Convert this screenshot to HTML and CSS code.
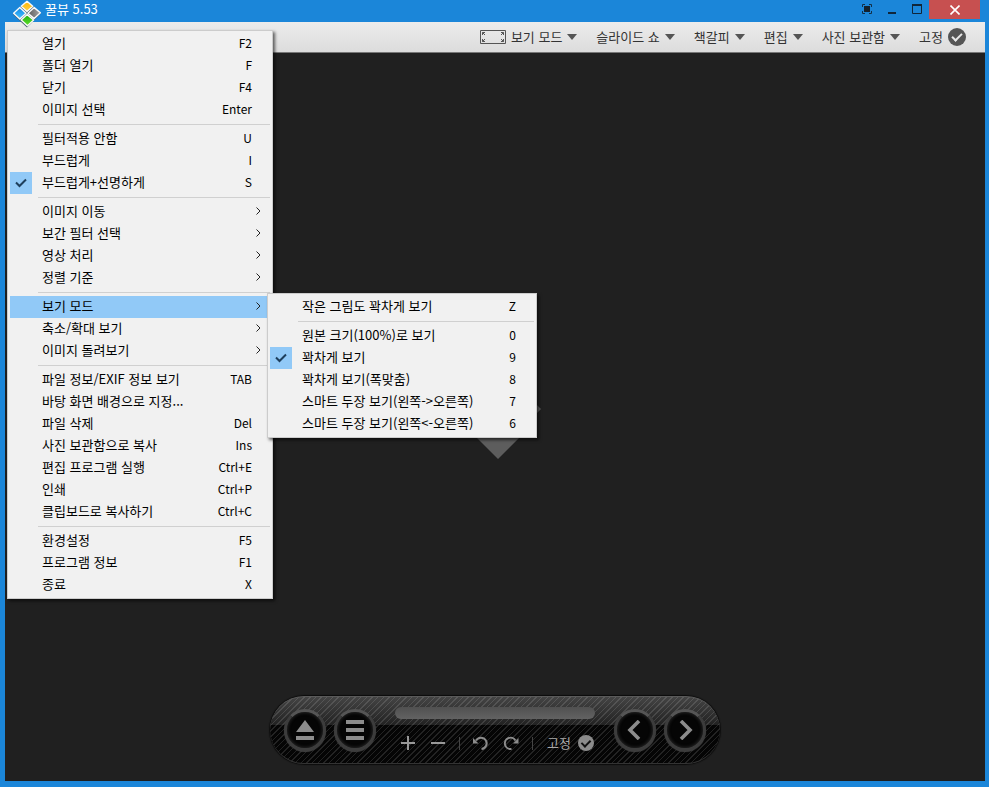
FILE: index.html
```html
<!DOCTYPE html>
<html lang="ko">
<head>
<meta charset="utf-8">
<title>꿀뷰 5.53</title>
<link rel="stylesheet" href="styles.css">
</head>
<body>
<div class="window">
  <header class="titlebar">
    <svg class="logo" width="30" height="28" viewBox="0 0 30 28">
      <defs>
        <linearGradient id="gy" x1="0" y1="0" x2="0" y2="1"><stop offset="0" stop-color="#ffb400"/><stop offset="1" stop-color="#ffd24a"/></linearGradient>
        <linearGradient id="gb" x1="0" y1="0" x2="0" y2="1"><stop offset="0" stop-color="#0f86e4"/><stop offset="1" stop-color="#4cc4ff"/></linearGradient>
        <linearGradient id="gg" x1="0" y1="0" x2="0" y2="1"><stop offset="0" stop-color="#1fae10"/><stop offset="1" stop-color="#62e02c"/></linearGradient>
        <linearGradient id="gk" x1="0" y1="0" x2="1" y2="0"><stop offset="0" stop-color="#5c5c5c"/><stop offset="1" stop-color="#a4a4a4"/></linearGradient>
      </defs>
      <path d="M15 1L29 13.500L15 27.500L1 14.500z" fill="#4a6172"/>
      <g stroke="#fafafa" stroke-width="1.400" stroke-linejoin="round">
        <path d="M15 1.200L20.800 6.200L15 11.400L9.200 6.200z" fill="url(#gy)"/>
        <path d="M7.800 7.600L14 13.200L7.800 19L1.600 13.200z" fill="url(#gb)"/>
        <path d="M22.200 7.600L28.400 12.800L22.200 18.600L16 13.200z" fill="url(#gk)"/>
        <path d="M15.200 14.600L21.600 20L15.500 25.800L9.200 20z" fill="url(#gg)"/>
      </g>
    </svg>
    <h1 class="title">꿀뷰 5.53</h1>
    <div class="controls">
      <button class="control" aria-label="전체 화면">
        <svg width="10" height="10" viewBox="0 0 10 10"><path d="M.5 3V.5H3M7 .5H9.500V3M9.500 7V9.500H7M3 9.500H.5V7" fill="none" stroke="#123048"/><path d="M2 2h6v6H2z" fill="#14212c"/></svg>
      </button>
      <button class="control" aria-label="최소화">
        <svg width="10" height="10" viewBox="0 0 10 10"><path d="M1 8h8v2H1z" fill="#10263a"/></svg>
      </button>
      <button class="control" aria-label="최대화">
        <svg width="10" height="10" viewBox="0 0 10 10"><path d="M.5 1.500h9v8h-9z" fill="none" stroke="#10263a"/><path d="M0 0h10v2H0z" fill="#10263a"/></svg>
      </button>
      <button class="control close" aria-label="닫기">
        <svg width="10" height="10" viewBox="0 0 10 10"><path d="M.5 .5L9.500 9.500M9.500 .5L.5 9.500" stroke="#fff" stroke-width="1.600"/></svg>
      </button>
    </div>
  </header>

  <nav class="toolbar">
    <button class="tool">
      <svg width="26" height="14" viewBox="0 0 26 14" fill="none" stroke="#555"><path d="M.5 .5h25v13H.5z"/><path d="M2.500 5V2.500H5M2.500 2.500l2.500 2.500M21 2.500h2.500V5M23.500 2.500L21 5M2.500 9v2.500H5M2.500 11.500L5 9M23.500 9v2.500H21M23.500 11.500L21 9"/></svg>
      보기 모드 <span class="caret"></span>
    </button>
    <button class="tool">슬라이드 쇼 <span class="caret"></span></button>
    <button class="tool">책갈피 <span class="caret"></span></button>
    <button class="tool">편집 <span class="caret"></span></button>
    <button class="tool">사진 보관함 <span class="caret"></span></button>
    <label class="tool pin">고정 <input type="checkbox" class="round" checked></label>
  </nav>

  <main class="viewer">
    <div class="stage">
      <svg width="100" height="100" viewBox="0 0 100 100" fill="#5d5d5d">
        <path d="M53 0L75 22H31zM53 100L75 78H31zM10 50L16 44V56zM96 50L90 44V56z"/>
      </svg>
    </div>

    <div class="dock">
      <button class="knob" aria-label="열기">
        <svg width="20" height="20" viewBox="0 0 20 20" fill="#8c8c8c"><path d="M10 0L19 12H1zM1 16h18v4H1z"/></svg>
      </button>
      <button class="knob" aria-label="메뉴">
        <svg width="20" height="20" viewBox="0 0 20 20" fill="#8c8c8c"><path d="M1 0h18v4H1zM1 8h18v4H1zM1 16h18v4H1z"/></svg>
      </button>
      <div class="panel">
        <input type="range" class="seek" value="0" aria-label="이미지 위치">
        <div class="actions">
          <button class="action" aria-label="확대">
            <svg width="14" height="14" viewBox="0 0 14 14"><path d="M7 0v14M0 7h14" stroke="#999" stroke-width="2"/></svg>
          </button>
          <button class="action" aria-label="축소">
            <svg width="14" height="14" viewBox="0 0 14 14"><path d="M0 7h14" stroke="#999" stroke-width="2"/></svg>
          </button>
          <span class="divider"></span>
          <button class="action" aria-label="왼쪽으로 회전">
            <svg width="16" height="14" viewBox="0 0 16 14"><path d="M3 4.500A5.700 5.700 0 1 1 8.500 13" fill="none" stroke="#8c8c8c" stroke-width="2"/><path d="M0 2v5.500h5.500z" fill="#8c8c8c"/></svg>
          </button>
          <button class="action" aria-label="오른쪽으로 회전">
            <svg width="16" height="14" viewBox="0 0 16 14"><path d="M12.500 4.500A5.700 5.700 0 1 0 8.500 13" fill="none" stroke="#8c8c8c" stroke-width="2"/><path d="M15.500 2v5.500H10z" fill="#8c8c8c"/></svg>
          </button>
          <span class="divider"></span>
          <label class="lock">고정 <input type="checkbox" class="round small" checked></label>
        </div>
      </div>
      <button class="knob" aria-label="이전">
        <svg width="20" height="20" viewBox="0 0 20 20"><path d="M14 1L5 10L14 19" fill="none" stroke="#8c8c8c" stroke-width="3.600"/></svg>
      </button>
      <button class="knob" aria-label="다음">
        <svg width="20" height="20" viewBox="0 0 20 20"><path d="M6 1L15 10L6 19" fill="none" stroke="#8c8c8c" stroke-width="3.600"/></svg>
      </button>
    </div>
  </main>

  <div class="menu main-menu" role="menu">
    <button class="item">열기 <kbd>F2</kbd></button>
    <button class="item">폴더 열기 <kbd>F</kbd></button>
    <button class="item">닫기 <kbd>F4</kbd></button>
    <button class="item">이미지 선택 <kbd>Enter</kbd></button>
    <hr>
    <button class="item">필터적용 안함 <kbd>U</kbd></button>
    <button class="item">부드럽게 <kbd>I</kbd></button>
    <button class="item checked"><svg class="tick" width="22" height="22" viewBox="0 0 22 22"><path d="M6 10.500L9.500 14L16 7.500"/></svg>부드럽게+선명하게 <kbd>S</kbd></button>
    <hr>
    <button class="item sub">이미지 이동 <svg width="5" height="8" viewBox="0 0 5 8"><path d="M.5 .5L4 4L.5 7.500"/></svg></button>
    <button class="item sub">보간 필터 선택 <svg width="5" height="8" viewBox="0 0 5 8"><path d="M.5 .5L4 4L.5 7.500"/></svg></button>
    <button class="item sub">영상 처리 <svg width="5" height="8" viewBox="0 0 5 8"><path d="M.5 .5L4 4L.5 7.500"/></svg></button>
    <button class="item sub">정렬 기준 <svg width="5" height="8" viewBox="0 0 5 8"><path d="M.5 .5L4 4L.5 7.500"/></svg></button>
    <hr>
    <div class="holder">
      <button class="item sub active">보기 모드 <svg width="5" height="8" viewBox="0 0 5 8"><path d="M.5 .5L4 4L.5 7.500"/></svg></button>
      <div class="menu sub-menu" role="menu">
        <button class="item">작은 그림도 꽉차게 보기 <kbd>Z</kbd></button>
        <hr>
        <button class="item">원본 크기(100%)로 보기 <kbd>0</kbd></button>
        <button class="item checked"><svg class="tick" width="22" height="22" viewBox="0 0 22 22"><path d="M6 10.500L9.500 14L16 7.500"/></svg>꽉차게 보기 <kbd>9</kbd></button>
        <button class="item">꽉차게 보기(폭맞춤) <kbd>8</kbd></button>
        <button class="item">스마트 두장 보기(왼쪽-&gt;오른쪽) <kbd>7</kbd></button>
        <button class="item">스마트 두장 보기(왼쪽&lt;-오른쪽) <kbd>6</kbd></button>
      </div>
    </div>
    <button class="item sub">축소/확대 보기 <svg width="5" height="8" viewBox="0 0 5 8"><path d="M.5 .5L4 4L.5 7.500"/></svg></button>
    <button class="item sub">이미지 돌려보기 <svg width="5" height="8" viewBox="0 0 5 8"><path d="M.5 .5L4 4L.5 7.500"/></svg></button>
    <hr>
    <button class="item">파일 정보/EXIF 정보 보기 <kbd>TAB</kbd></button>
    <button class="item">바탕 화면 배경으로 지정...</button>
    <button class="item">파일 삭제 <kbd>Del</kbd></button>
    <button class="item">사진 보관함으로 복사 <kbd>Ins</kbd></button>
    <button class="item">편집 프로그램 실행 <kbd>Ctrl+E</kbd></button>
    <button class="item">인쇄 <kbd>Ctrl+P</kbd></button>
    <button class="item">클립보드로 복사하기 <kbd>Ctrl+C</kbd></button>
    <hr>
    <button class="item">환경설정 <kbd>F5</kbd></button>
    <button class="item">프로그램 정보 <kbd>F1</kbd></button>
    <button class="item">종료 <kbd>X</kbd></button>
  </div>
</div>
</body>
</html>
```
FILE: styles.css
```css
*, *::before {
  box-sizing: border-box;
}

body {
  margin: 0;
  font: 13px/20px "Noto Sans CJK KR", "Noto Sans", sans-serif;
}

button {
  font: inherit;
  color: inherit;
  background: none;
  border: none;
  margin: 0;
  padding: 0;
}

svg {
  display: block;
  flex: none;
}

.window {
  position: relative;
  display: flex;
  flex-direction: column;
  min-height: 100vh;
  padding: 0 4px 6px 5px;
  background: #1b86d9;
}

/* title bar */
.titlebar {
  display: flex;
  justify-content: space-between;
  align-items: flex-start;
  height: 22px;
  padding-left: 40px;
}

.logo {
  position: absolute;
  left: 12px;
  top: 0;
}

.title {
  margin: 0;
  font-size: 13px;
  font-weight: normal;
  line-height: 18px;
  color: #fff;
}

.controls {
  display: flex;
  padding-right: 5px;
}

.control {
  display: flex;
  align-items: center;
  justify-content: center;
  width: 25px;
  height: 18px;
}

.close {
  width: 51px;
  height: 19px;
  background: #c75050;
}

/* toolbar */
.toolbar {
  display: flex;
  justify-content: flex-end;
  align-items: center;
  gap: 19px;
  height: 31px;
  padding-right: 19px;
  background: linear-gradient(#ececec, #dcdcdc);
  border-bottom: 1px solid #777;
  color: #333;
}

.tool {
  display: flex;
  align-items: center;
  gap: 5px;
}

.caret {
  border: 5px solid transparent;
  border-top: 6px solid #555;
  border-bottom: none;
}

.round {
  appearance: none;
  display: flex;
  justify-content: center;
  width: 18px;
  height: 18px;
  margin: 0;
  border-radius: 50%;
  background: #555;
}

.round:checked::before {
  content: "";
  width: 6px;
  height: 10px;
  margin-top: 3px;
  border: solid #e8e8e8;
  border-width: 0 2px 2px 0;
  transform: rotate(45deg);
}

.small {
  width: 16px;
  height: 16px;
  background: #8c8c8c;
}

.small:checked::before {
  height: 9px;
  border-color: #111;
}

/* image area */
.viewer {
  flex: 1;
  display: flex;
  flex-direction: column;
  align-items: center;
  padding-bottom: 17px;
  background: #202020;
}

.stage {
  flex: 1;
  display: flex;
  align-items: center;
  padding-top: 68px;
}

.dock {
  display: flex;
  align-items: center;
  gap: 8px;
  height: 68px;
  padding: 0 14px;
  border-radius: 34px;
  border-top: 1px solid #5a5a5a;
  border-bottom: 1px solid #333;
  background:
    repeating-linear-gradient(135deg, rgba(255, 255, 255, .12) 0 1px, transparent 1px 4px),
    linear-gradient(#444 0, #222 42%, #050505 43%, #050505 100%);
  box-shadow: 0 0 1px 1px #0c0c0c;
}

.knob {
  display: flex;
  align-items: center;
  justify-content: center;
  width: 42px;
  height: 42px;
  border: 3px solid #3c3c3c;
  border-top-color: #555;
  border-radius: 50%;
  background: #050505;
  box-shadow: 0 1px 1px #444, inset 0 0 3px 1px #222;
}

.panel {
  width: 200px;
  height: 46px;
  margin: 0 11px;
}

.seek {
  appearance: none;
  display: block;
  width: 100%;
  height: 12px;
  margin: 0;
  border-radius: 6px;
  background: linear-gradient(#505050, #626262);
}

.seek::-webkit-slider-thumb {
  appearance: none;
  width: 0;
  height: 0;
}

.actions {
  display: flex;
  align-items: center;
  gap: 4px;
  height: 20px;
  margin-top: 14px;
}

.action {
  display: flex;
  align-items: center;
  justify-content: center;
  width: 26px;
  height: 20px;
}

.divider {
  width: 1px;
  height: 13px;
  margin: 0 4px;
  background: #444;
}

.lock {
  display: flex;
  align-items: center;
  gap: 7px;
  padding-left: 6px;
  color: #aaa;
}

/* menus */
.menu {
  position: absolute;
  padding: 2px;
  background: #f1f1f1;
  border: 1px solid #ccc;
  box-shadow: 2px 2px 3px rgba(0, 0, 0, .6);
  color: #000;
}

.main-menu {
  left: 7px;
  top: 30px;
  width: 266px;
}

.holder {
  position: relative;
}

.sub-menu {
  left: 257px;
  top: -3px;
  width: 270px;
}

.item {
  display: flex;
  align-items: center;
  justify-content: space-between;
  width: 100%;
  height: 22px;
  padding: 0 18px 2px 32px;
  white-space: nowrap;
}

.item kbd {
  font: 12px/20px "Noto Sans CJK KR", "Noto Sans", sans-serif;
}

.item svg {
  fill: none;
  stroke: #222;
}

.checked {
  justify-content: flex-start;
  padding-left: 0;
}

.checked kbd {
  margin-left: auto;
}

.item .tick {
  align-self: flex-start;
  margin: 0 10px -2px 0;
  background: #91c9f7;
  stroke: #1e3f5c;
  stroke-width: 2;
}

.sub {
  padding-right: 9px;
}

.active {
  background: #91c9f7;
}

.menu hr {
  height: 1px;
  margin: 3px 0 3px 28px;
  border: none;
  background: #d0d0d0;
}
```
